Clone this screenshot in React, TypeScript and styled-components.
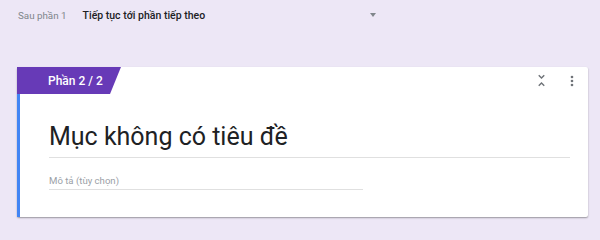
import styled, { createGlobalStyle } from 'styled-components'

const GlobalStyle = createGlobalStyle`
  html, body {
    margin: 0;
    padding: 0;
    background: #ede7f6;
    font-family: Roboto, 'Noto Sans', Arial, sans-serif;
  }
`

const Page = styled.div`
  width: 600px;
  height: 227px;
  overflow: hidden;
  display: flex;
  flex-flow: column nowrap;
`

const TopBar = styled.div`
  height: 30px;
  padding-left: 18px;
  display: flex;
  align-items: center;
  gap: 16px;
`

const AfterLabel = styled.span`
  font-size: 9.8px;
  color: #80868b;
`

const Select = styled.div`
  width: 296px;
  display: flex;
  align-items: center;
  justify-content: space-between;
  font-size: 10.5px;
  font-weight: 500;
  color: #202124;
`

const Caret = styled.span`
  width: 0;
  height: 0;
  margin-right: 3px;
  border-left: 3.5px solid transparent;
  border-right: 3.5px solid transparent;
  border-top: 4px solid #80868b;
`

const Card = styled.div`
  margin: 37px 0 0 17px;
  width: 571px;
  background: #fff;
  border-radius: 2px;
  box-shadow: 0 1px 2px rgba(0, 0, 0, 0.28), 0 1px 1px rgba(0, 0, 0, 0.1);
`

const CardHead = styled.div`
  height: 27px;
  display: flex;
  align-items: center;
`

const Tab = styled.div`
  width: 104px;
  height: 27px;
  box-sizing: border-box;
  padding-left: 31px;
  display: flex;
  align-items: center;
  background: #673ab7;
  color: #fff;
  font-size: 12px;
  font-weight: 500;
  clip-path: polygon(0 0, 100% 0, calc(100% - 11px) 100%, 0 100%);
`

const Tools = styled.div`
  margin-left: auto;
  margin-right: 8px;
  display: flex;
  align-items: center;
  gap: 14px;
  color: #6f7378;
  svg {
    display: block;
  }
`

const CardBody = styled.div`
  border-left: 3px solid #4285f4;
  padding: 28px 18px 27px 29px;
  display: flex;
  flex-flow: column nowrap;
`

const Title = styled.div`
  font-size: 25px;
  line-height: 30px;
  color: #202124;
  padding-bottom: 5px;
  border-bottom: 1px solid #e0e0e0;
`

const Description = styled.div`
  margin-top: 15px;
  width: 314px;
  font-size: 9.6px;
  line-height: 16px;
  color: #9aa0a6;
  border-bottom: 1px solid #e0e0e0;
`

const UnfoldLess = () => (
  <svg width="17" height="17" viewBox="0 0 24 24" fill="currentColor">
    <path d="M7.41 18.59L8.83 20 12 16.83 15.17 20l1.41-1.41L12 14l-4.59 4.59zm9.18-13.18L15.17 4 12 7.17 8.83 4 7.41 5.41 12 10l4.59-4.59z" />
  </svg>
)

const MoreVert = () => (
  <svg width="16" height="16" viewBox="0 0 24 24" fill="currentColor">
    <circle cx="12" cy="6" r="2" />
    <circle cx="12" cy="12" r="2" />
    <circle cx="12" cy="18" r="2" />
  </svg>
)

export default function App() {
  return (
    <Page>
      <GlobalStyle />
      <TopBar>
        <AfterLabel>Sau phần 1</AfterLabel>
        <Select>
          <span>Tiếp tục tới phần tiếp theo</span>
          <Caret />
        </Select>
      </TopBar>
      <Card>
        <CardHead>
          <Tab>Phần 2 / 2</Tab>
          <Tools>
            <UnfoldLess />
            <MoreVert />
          </Tools>
        </CardHead>
        <CardBody>
          <Title>Mục không có tiêu đề</Title>
          <Description>Mô tả (tùy chọn)</Description>
        </CardBody>
      </Card>
    </Page>
  )
}
